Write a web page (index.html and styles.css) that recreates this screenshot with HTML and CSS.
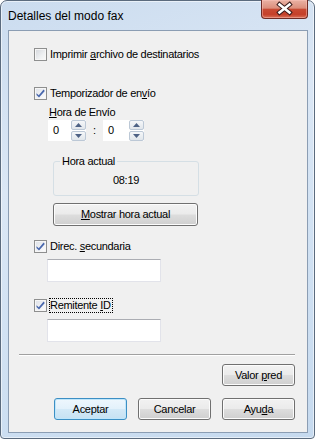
FILE: index.html
```html
<!DOCTYPE html>
<html lang="es">
<head>
    <meta charset="UTF-8">
    <title>Detalles del modo fax</title>
    <link rel="stylesheet" href="styles.css">
</head>
<body>
<div class="window">
    <div class="titlebar">
        <span class="title">Detalles del modo fax</span>
        <span class="close">
            <svg width="45" height="17" viewBox="0 0 45 17">
                <path d="M17.5 4.5 L27.5 12.5 M27.5 4.5 L17.5 12.5" stroke="#3a1c1c" stroke-width="4.6" stroke-linecap="square"/>
                <path d="M17.5 4.5 L27.5 12.5 M27.5 4.5 L17.5 12.5" stroke="#ffffff" stroke-width="2.6" stroke-linecap="square"/>
            </svg>
        </span>
    </div>

    <div class="client">
        <div class="form">
            <label class="check row-print">
                <span class="box"></span>
                <span>Imprimir <u>a</u>rchivo de destinatarios</span>
            </label>

            <label class="check row-timer">
                <span class="box checked"><svg width="11" height="11" viewBox="0 0 11 11"><polygon points="1.5,5.2 3.8,7.2 8.6,1.6 9.8,3 4,9.6 1.5,7" fill="#4867ad"/></svg></span>
                <span>Temporizador de en<u>v</u>ío</span>
            </label>

            <div class="timer">
                <div class="timer-label"><u>H</u>ora de Envío</div>
                <div class="spins">
                    <div class="spin">
                        <span class="spin-edit">0</span>
                        <span class="spin-btns">
                            <span class="spin-btn"><svg width="7" height="4" viewBox="0 0 7 4"><polygon points="0,4 3.5,0 7,4" fill="#4e6285"/></svg></span>
                            <span class="spin-btn"><svg width="7" height="4" viewBox="0 0 7 4"><polygon points="0,0 7,0 3.5,4" fill="#4e6285"/></svg></span>
                        </span>
                    </div>
                    <span class="colon">:</span>
                    <div class="spin">
                        <span class="spin-edit">0</span>
                        <span class="spin-btns">
                            <span class="spin-btn"><svg width="7" height="4" viewBox="0 0 7 4"><polygon points="0,4 3.5,0 7,4" fill="#4e6285"/></svg></span>
                            <span class="spin-btn"><svg width="7" height="4" viewBox="0 0 7 4"><polygon points="0,0 7,0 3.5,4" fill="#4e6285"/></svg></span>
                        </span>
                    </div>
                </div>

                <fieldset class="now">
                    <legend>Hora actual</legend>
                    <div class="now-time">08:19</div>
                </fieldset>

                <button class="btn btn-now"><u>M</u>ostrar hora actual</button>
            </div>

            <label class="check row-second">
                <span class="box checked"><svg width="11" height="11" viewBox="0 0 11 11"><polygon points="1.5,5.2 3.8,7.2 8.6,1.6 9.8,3 4,9.6 1.5,7" fill="#4867ad"/></svg></span>
                <span>Direc. <u>s</u>ecundaria</span>
            </label>
            <div class="edit edit-second"></div>

            <label class="check row-sender">
                <span class="box checked"><svg width="11" height="11" viewBox="0 0 11 11"><polygon points="1.5,5.2 3.8,7.2 8.6,1.6 9.8,3 4,9.6 1.5,7" fill="#4867ad"/></svg></span>
                <span class="focus">Remitente <u>I</u>D</span>
            </label>
            <div class="edit edit-sender"></div>
        </div>

        <div class="separator"></div>

        <div class="btn-row row-default">
            <button class="btn">Valor <u>p</u>red</button>
        </div>
        <div class="btn-row row-main">
            <button class="btn btn-default">Aceptar</button>
            <button class="btn">Cancelar</button>
            <button class="btn">Ayu<u>d</u>a</button>
        </div>
    </div>
</div>
</body>
</html>
```

FILE: styles.css
```css
body {
    margin: 0;
    font-family: "Liberation Sans", Arial, sans-serif;
    font-size: 11px;
    line-height: 13px;
    color: #000;
}
.window {
    width: 315px;
    height: 439px;
    box-sizing: border-box;
    border: 1px solid #5b6b7e;
    border-radius: 7px 7px 4px 4px;
    background: linear-gradient(160deg, #cbdcef 0, #dbe7f5 35%, #d2e2f3 60%, #c6daef 100%);
    box-shadow: inset 0 0 0 1px rgba(255, 255, 255, 0.55);
    padding: 0 6px 5px 7px;
    display: flex;
    flex-direction: column;
}
.titlebar {
    height: 29px;
    display: flex;
    flex-shrink: 0;
}
.title {
    font-size: 12px;
    line-height: 14px;
    padding-top: 8px;
}
.close {
    margin-left: auto;
    margin-top: -1px;
    width: 47px;
    height: 19px;
    box-sizing: border-box;
    border: 1px solid #6e2b25;
    border-top: none;
    border-radius: 0 0 4px 4px;
    background: linear-gradient(#eab2a4 0, #dc8e7c 45%, #c84a33 52%, #c5402a 80%, #d87058 100%);
    box-shadow: inset 0 0 0 1px rgba(255, 200, 190, 0.45);
    display: flex;
}
.client {
    flex: 1;
    background: #f0f0f0;
    border: 1px solid #8b9db3;
    padding: 17px 12px 0 10px;
    display: flex;
    flex-direction: column;
}
.form {
    padding-left: 15px;
    display: flex;
    flex-direction: column;
    align-items: flex-start;
}
.check {
    display: flex;
    align-items: center;
    gap: 3px;
    height: 13px;
    letter-spacing: -0.3px;
}
.check u, .timer u, .btn u {
    text-decoration-thickness: 1px;
    text-underline-offset: 1px;
}
.box {
    width: 13px;
    height: 13px;
    box-sizing: border-box;
    border: 1px solid #8e8f8f;
    background: linear-gradient(135deg, #d3d6db 0, #eef0f2 60%, #fafafa 100%);
    box-shadow: inset 0 0 0 1px #f6f6f6;
    display: flex;
    flex-shrink: 0;
}
.box.checked {
    background: linear-gradient(135deg, #dde1e8 0, #f4f5f7 70%, #ffffff 100%);
}
.row-timer { margin-top: 26px; }
.row-second { margin-top: 14px; }
.row-sender { margin-top: 17px; }
.focus {
    outline: 1px dotted #000;
    outline-offset: 0;
    padding: 0 1px 0 0;
}
.timer {
    margin: 6px 0 0 14px;
    display: flex;
    flex-direction: column;
    align-items: flex-start;
    letter-spacing: -0.3px;
}
.timer-label {
    padding-left: 1px;
}
.spins {
    margin-top: 1px;
    display: flex;
    align-items: center;
    height: 21px;
}
.spin {
    display: flex;
    height: 21px;
}
.spin-edit {
    width: 23px;
    box-sizing: border-box;
    background: #fff;
    padding: 4px 0 0 5px;
}
.spin-btns {
    width: 15px;
    display: flex;
    flex-direction: column;
    gap: 1px;
    background: #fff;
}
.spin-btn {
    flex: 1;
    box-sizing: border-box;
    border: 1px solid #bcc8d6;
    border-radius: 2px;
    background: linear-gradient(#f5f7f9, #e1e6eb);
    display: flex;
    align-items: center;
    justify-content: center;
}
.colon {
    width: 17px;
    text-align: center;
}
.spin + .colon + .spin .spin-edit {
    width: 26px;
}
.now {
    margin: 14px 0 0 5px;
    width: 146px;
    box-sizing: border-box;
    min-inline-size: 0;
    border: 1px solid #d5dfe5;
    border-radius: 3px;
    padding: 0;
}
.now legend {
    margin-left: 6px;
    padding: 0 2px;
}
.now-time {
    text-align: center;
    padding: 6px 0 8px;
}
.btn {
    font-family: inherit;
    font-size: 11px;
    line-height: 13px;
    color: #000;
    letter-spacing: -0.3px;
    width: 73px;
    height: 22px;
    box-sizing: border-box;
    border: 1px solid #707070;
    border-radius: 3px;
    padding: 0;
    background: linear-gradient(#f2f2f2 0, #ebebeb 48%, #dddddd 52%, #cfcfcf 100%);
    box-shadow: inset 0 0 0 1px #fcfcfc;
}
.btn-now {
    margin: 7px 0 0 5px;
    width: 145px;
    height: 23px;
}
.btn-default {
    border-color: #3c8fc4;
    background: linear-gradient(#eef7fd 0, #e3f1fb 48%, #d3e9f7 52%, #c6e1f2 100%);
    box-shadow: inset 0 0 0 1px #bfe6fb;
}
.edit {
    width: 114px;
    height: 23px;
    box-sizing: border-box;
    background: #fff;
    border: 1px solid #e2e3ea;
    border-top-color: #abadb3;
    margin-left: 13px;
}
.edit-second { margin-top: 6px; }
.edit-sender { margin-top: 7px; }
.separator {
    margin-top: 12px;
    border-top: 1px solid #a0a0a0;
    border-bottom: 1px solid #ffffff;
}
.btn-row {
    display: flex;
    justify-content: flex-end;
    gap: 11px;
}
.row-default { margin-top: 8px; }
.row-main { margin-top: 12px; }
```
